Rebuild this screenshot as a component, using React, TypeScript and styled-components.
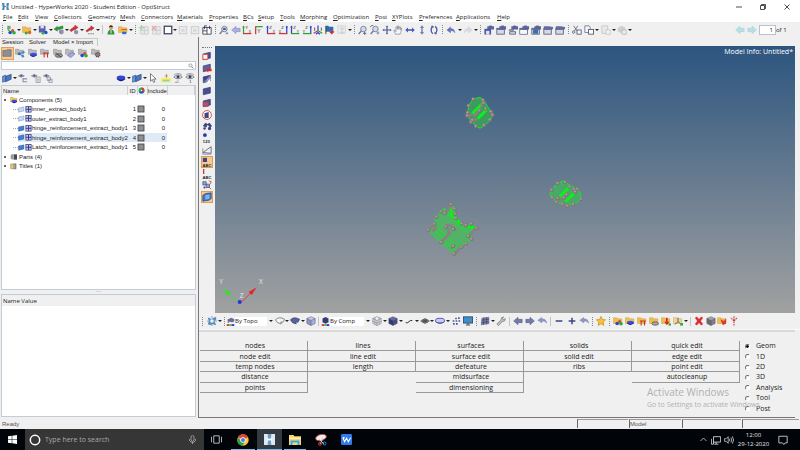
import React from "react";
import styled, { createGlobalStyle, css } from "styled-components";

const ui = '"Open Sans", "Noto Sans", sans-serif';
const arial = '"Liberation Sans", Arial, sans-serif';

const GlobalStyle = createGlobalStyle`
  * { box-sizing: border-box; }
  html, body { margin: 0; padding: 0; }
  body { background: #f0f0f0; color: #222; font-family: ${ui}; font-size: 6px; line-height: 8px; }
  button, input, select { font: inherit; color: inherit; margin: 0; padding: 0; border: 0; background: none; border-radius: 0; }
  ul { list-style: none; margin: 0; padding: 0; }
`;

/* ---------- icons ---------- */

const N = "#3d4682";
const folder = (c = "#f3bd4a") => (
  <path d="M0.5 2h4l1 1.3h5V9h-10z" fill={c} stroke="#a88a50" strokeWidth=".4" />
);
const greyFolder = (
  <path d="M0.5 1.5h4l1 1.2h4.5V7.5h-9.5z" fill="#b9b9b9" stroke="#7d7d7d" strokeWidth=".5" />
);
const balls = (
  <>
    <circle cx="8" cy="6.8" r="1.9" fill="#e3452f" />
    <circle cx="5" cy="9" r="2.2" fill="#2947d8" />
    <circle cx="9.6" cy="9.3" r="2.2" fill="#2fae34" />
  </>
);
const disc = (
  <>
    <path d="M2.5 7.5v1.500q3.500 3.500 8 0v-1.500z" fill="#121d8c" />
    <ellipse cx="6.500" cy="7.500" rx="4" ry="1.900" fill="#3c4ee0" />
  </>
);
const cube = (t: string, l: string, r: string) => (
  <>
    <path d="M6 .8l5 2.200-5 2.400-5-2.400z" fill={t} />
    <path d="M1 3l5 2.400v6L1 8.900z" fill={l} />
    <path d="M11 3L6 5.400v6l5-2.500z" fill={r} />
    <path d="M6 .8l5 2.200v5.900l-5 2.500-5-2.500V3zM1 3l5 2.400L11 3M6 5.400v6" fill="none" stroke="#3b3f68" strokeWidth=".5" />
  </>
);
const slab = (fill: string) => (
  <path d="M1.500 3.500l8.500-2v7l-8.500 2z" fill={fill} stroke="#242c66" strokeWidth=".7" />
);
const axes = (v: string, h: string, flip: boolean, a: string, b: string) => (
  <g>
    <path d={flip ? "M10.500 1.500v9" : "M1.800 1.500v9"} stroke={v} strokeWidth="1.500" />
    <path d="M1.200 10.300h10" stroke={h} strokeWidth="1.500" />
    <path d={flip ? "M9 3l1.500-2.500L12 3" : "M.3 3l1.500-2.500L3.300 3"} fill={v} />
    <text x={flip ? 4 : 3.8} y="5" fontSize="5" fontFamily="Liberation Sans" fill="#222">{a}</text>
    <text x={flip ? 1 : 8} y="9" fontSize="4" fontFamily="Liberation Sans" fill="#222">{b}</text>
  </g>
);
const lens = (
  <>
    <circle cx="6.500" cy="4.800" r="3.300" fill="#d5daf0" stroke="#70758f" />
    <path d="M4 7.200L.8 10.800" stroke="#70758f" strokeWidth="1.500" />
  </>
);
const eye = (
  <>
    <path d="M1 5q5-5.500 10 0-5 4-10 0z" fill="#e8e8ea" stroke="#555a68" strokeWidth=".8" />
    <circle cx="6" cy="4.600" r="1.800" fill="#39415c" />
    <path d="M1 2.500Q6-1.500 11 2.500" fill="none" stroke="#777" strokeWidth=".7" />
  </>
);
const smallEye = (
  <>
    <path d="M.5 3.500q3.500-3.500 7 0-3.500 3-7 0z" fill="#dde" stroke="#6a7084" strokeWidth=".8" />
    <circle cx="4" cy="3.300" r="1.300" fill="#44506e" />
  </>
);
const win = (
  <>
    <rect x="1" y="4" width="9" height="7" fill="#d6d8e2" stroke="#575c7a" />
    <path d="M1 5h9" stroke="#575c7a" strokeWidth="1.500" />
  </>
);
const cam = <path d="M4 1.500h2l.6-1h2.500l.5 1H12v4H4z" fill="#5a619c" />;
const bend = (c: string) => (
  <path d="M10.800 9.500Q10 4 5.500 4.300V2L1 6l4.500 3.500V7Q8.500 6 10.800 9.500z" fill={c} stroke="#6a70a8" strokeWidth=".4" />
);
const back = (c: string, s: string) => (
  <path d="M.8 6L6 1.500V4h5v4H6v2.500z" fill={c} stroke={s} strokeWidth=".6" />
);
const forward = (c: string, s: string) => (
  <path d="M11.200 6L6 1.500V4H1v4h5v2.500z" fill={c} stroke={s} strokeWidth=".6" />
);
const swoosh = (c: string) => (
  <path d="M11.500 8.500Q11 3 6 3.500L5.500 1.800 1 5.200l4.800 3 .2-1.900Q9.500 5.500 11.500 8.500z" fill={c} stroke="#5a619a" strokeWidth=".4" />
);
const abc = (
  <text x=".5" y="11.500" fontSize="5" fontWeight="700" fontFamily="Liberation Sans" fill="#222">ABC</text>
);
const rainbow = (
  <>
    <path d="M1 9.500h3.300V12H1z" fill="#e33" />
    <path d="M4.300 9.500h3.300V12H4.300z" fill="#3c3" />
    <path d="M7.600 9.500H11V12H7.600z" fill="#33e" />
  </>
);

const art: Record<string, React.ReactNode> = {
  model: <>{balls}<path d="M1.500 1h4v4h-4z" fill="#74a86b" /><path d="M2 5l3 3" stroke="#2fae34" strokeWidth="1.500" /></>,
  open: <>{folder()}<circle cx="5" cy="9.500" r="1.800" fill="#2fae34" /><circle cx="9" cy="9" r="2" fill="#e05b2a" /></>,
  save: <><path d="M1 1h8v8H1z" fill="#5b62a8" /><path d="M3 1h4v3H3z" fill="#e2e5f4" /><circle cx="6" cy="10" r="1.700" fill="#2fae34" /><circle cx="9.500" cy="9" r="2" fill="#2947d8" /></>,
  importG: <><path d="M0 5l4-3.500V3l6.500-2 .5 3-7 2v1.500z" fill="#2a9a34" stroke="#176a1e" strokeWidth=".4" /><path d="M6 6l2-1 3.500 1v4L9 11.500 6 10z" fill="#8d92aa" /></>,
  exportR: <><path d="M1 6l6-4.500V0l4 3-4 3V5L2.500 8z" fill="#d23434" stroke="#8c1717" strokeWidth=".4" /><path d="M6 7l2-1 3 1v3L9 11.500 6 10z" fill="#8d92aa" /></>,
  solveR: <><path d="M1 7l6-4.500V1l4 2.500L7 7V5.500L2.500 8.500z" fill="#d23434" stroke="#8c1717" strokeWidth=".4" /><path d="M4 10.500h7" stroke="#333" strokeDasharray="1.300 1.300" /></>,
  person: <><circle cx="6" cy="2.800" r="2.500" fill="#d99a55" /><path d="M3.500 2.500Q6-2 8.500 2.500z" fill="#3b2a18" /><path d="M1.800 11.500q.5-6 4.200-6t4.200 6z" fill="#2f9240" /><path d="M6 6v4" stroke="#fff" /></>,
  folderRB: <>{folder()}<path d="M4 5h7v1.500H4z" fill="#e2452e" /><path d="M4 6.500h7V8H4z" fill="#f4d52d" /><path d="M5 8h5v3H5z" fill="#3766d8" /></>,
  pagePlus: <g opacity=".35"><path d="M2 2h9v9H2zM6.500 2v9M2 6.500h9" fill="#ddd" stroke="#888" /><path d="M3 0v6M0 3h6" stroke="#2a9a34" strokeWidth="1.500" /></g>,
  pageX: <g opacity=".35"><path d="M2 2h9v9H2zM6.500 2v9M2 6.500h9" fill="#ddd" stroke="#888" /><path d="M1 1l5 5M6 1L1 6" stroke="#d22" strokeWidth="1.500" /></g>,
  square: <rect x="1.500" y="1.500" width="9" height="9" fill="#fff" stroke="#3b3f5c" strokeWidth="1.500" />,
  layoutDim: <g opacity=".45"><rect x="1.500" y="2" width="9" height="8.500" fill="#e4e4ea" stroke="#999" /><path d="M4 5h4v3H4z" fill="#bbb" /></g>,
  sheets: <><path d="M1 3h10v8H1z" fill="#fff" stroke="#33384f" /><path d="M6 3v8M1 7h5" stroke="#33384f" /><path d="M3 5V1h3M9 5V1" stroke="#33384f" fill="none" /></>,
  lensBox: <>{lens}<rect x="5" y="3.500" width="3" height="2.500" fill="#4d568e" /><path d="M8 9h3v2H8z" fill="#8a8fa8" /></>,
  lensPlus: <>{lens}<path d="M8 8v4M6 10h4" stroke="#555a78" /></>,
  lensBack: <>{lens}<path d="M0 3q1-3 4-2.500" stroke="#555a78" fill="none" /><path d="M8 8h3v3H8z" fill="#9aa0ba" /></>,
  back: back("#a9b0e0", "#7f86bd"),
  backDark: back("#747ba8", "#4c5382"),
  forwardDark: forward("#747ba8", "#4c5382"),
  pageBack: back("#b9dfe6", "#a2ccd5"),
  pageForward: forward("#b9dfe6", "#a2ccd5"),
  ax1: axes("#2ba33a", "#d43434", false, "Y", "X"),
  ax2: <g><path d="M1.500 2h9" stroke="#2ba33a" strokeWidth="1.500" /><path d="M2 2v9" stroke="#d43434" strokeWidth="1.500" /><text x="4" y="10" fontSize="6" fill="#222" fontFamily="Liberation Sans">Y</text></g>,
  ax3: axes("#3244cf", "#d43434", false, "Z", "X"),
  ax4: axes("#3244cf", "#d43434", true, "Z", "X"),
  ax5: axes("#3244cf", "#2ba33a", false, "Z", "Y"),
  ax6: axes("#3244cf", "#2ba33a", true, "Z", "Y"),
  ax7: <g strokeWidth="1.500" fill="none"><path d="M6 7V.5" stroke="#3244cf" /><path d="M6 7L.8 10" stroke="#d43434" /><path d="M6 7l5.200 3" stroke="#2ba33a" /><path d="M2 3v4M10 3v4" stroke="#444" strokeWidth="1" /><path d="M3.500 11L6 9l2.500 2" stroke="#3244cf" /></g>,
  flag: <><path d="M1 1h3l1 1h5v6H1z" fill="#2f6fae" /><path d="M1 1v10" stroke="#333" /><path d="M5 8l3 3.500L11.500 8l-3-1z" fill="#d43030" /></>,
  figureDim: <g opacity=".4"><rect x="1" y="1" width="9" height="9" fill="#d9e9ef" stroke="#9ab" /><circle cx="6" cy="4.500" r="2" fill="#d9a679" /><path d="M3 10q3-5 6 0z" fill="#8aa" /></g>,
  cross: <path d="M6 .5l1.500 2H6.700v2.800h2.800v-.8l2 1.500-2 1.500v-.8H6.700v2.800h.8l-1.500 2-1.500-2h.8V6.700H2.500v.8L.5 6l2-1.500v.8h2.800V2.500h-.8z" fill="#4b5491" />,
  hand: <path d="M3 11L1 6.500l1.200-.4L3.500 8V2.500l1.200-.3.500 3 .3-4h1.200l.2 4 .8-3.200 1.200.2-.2 3.600 1-2 1 .4-1.300 4.500L8.500 11z" fill="#f6f6f8" stroke="#6c7086" strokeWidth=".7" />,
  arrowsH: <path d="M.3 6l3.200-3v2h5V3l3.200 3-3.200 3V7h-5v2z" fill="#4953b5" />,
  arrowsV: <path d="M6 .3l2.600 3.200H6.900v5h1.700L6 11.700 3.400 8.500h1.700v-5H3.400z" fill="#7981bd" />,
  rotate: <g fill="none" stroke="#4b55a8" strokeWidth="1.500"><path d="M4.500 1.500Q.5 6 4.500 10.500" /><path d="M7.500 1.500q4 4.500 0 9" /><path d="M2.500 1.500h2.500v2M9.500 10.500H7v-2" strokeWidth="1" /></g>,
  undo: bend("#6670c0"),
  undoL: swoosh("#8d95cc"),
  redoDim: <g opacity=".35" transform="matrix(-1 0 0 1 12 0)">{bend("#b3b6cf")}</g>,
  w1: <>{cam}<path d="M.5 4.500h8v7h-8z" fill="#4f58a0" /><path d="M2.500 7h4v4.500h-4z" fill="#e3e5f0" /></>,
  w2: <>{win}{cam}</>,
  w3: <><path d="M2 8h7v3H2z" fill="#d6d8e2" stroke="#575c7a" />{cam}<path d="M1 6h6" stroke="#575c7a" strokeWidth="1.500" /></>,
  w4: <>{win}{cam}<path d="M1.500 6h8v4.500h-8z" fill="#f8f8fa" /></>,
  w5: <>{win}{cam}<path d="M2.500 6h6v4.500h-6z" fill="#3c6fa2" /></>,
  w6: <>{win}<path d="M1 1.500h6l5 1V5H1z" fill="#6269a6" /></>,
  cut: <><path d="M2 1l4 6M7 1L3 7" stroke="#5c6074" /><circle cx="2" cy="8.500" r="1.500" fill="none" stroke="#5c6074" /><rect x="6" y="6" width="5" height="5" fill="#fff" stroke="#4d5170" /></>,
  copy: <><path d="M1 1h5l1.500 2v6H1z" fill="#f4f4f7" stroke="#73778c" /><rect x="5.500" y="5.500" width="6" height="5.500" fill="#fff" stroke="#4d5170" /></>,
  pasteDim: <g opacity=".35"><path d="M1 1h7v9H1z" fill="#dcdde6" stroke="#777" /><rect x="6" y="6" width="5" height="5" fill="#fff" stroke="#777" /></g>,
  bugDim: <g opacity=".45"><path d="M1 4l4-3 5 2v5L5 9.500 1 8z" fill="#a7a9b8" /><rect x="6" y="6" width="5" height="5" fill="#eee" stroke="#777" /></g>,

  browse: <path d="M1 3h4l1-1h5v8H1z" fill="#8c8f96" stroke="#5d6068" strokeWidth=".7" />,
  bModel: <>{greyFolder}<path d="M5 7l5-2M5 7l4.500 3" stroke="#3b6db4" /><circle cx="5" cy="7" r="1.800" fill="#3b6db4" /><circle cx="10" cy="5" r="1.500" fill="#3b8ad0" /><circle cx="9.500" cy="10" r="1.500" fill="#3b8ad0" /></>,
  bDisc: <>{greyFolder}{disc}</>,
  bPi: <>{greyFolder}<path d="M3.500 6h7M5 6v5.500M9 6v5.500" stroke="#c8322d" strokeWidth="1.300" /></>,
  bPart: <>{greyFolder}<ellipse cx="7" cy="9" rx="4.500" ry="2.200" fill="#999" stroke="#444" strokeWidth=".8" /><path d="M3 6l7 5" stroke="#444" /></>,
  bMesh: <>{greyFolder}<path d="M3 9l5-4 4 2-5 4.500z" fill="#a3aadb" stroke="#5660a5" strokeWidth=".7" /></>,
  bSets: <>{greyFolder}{balls}</>,
  bGear: <>{greyFolder}<circle cx="8" cy="8" r="2.700" fill="#8b7d7d" stroke="#5e4646" strokeWidth="1.400" strokeDasharray="1.400 .8" /></>,
  shells: <><path d="M.5 4l4-1.500V10l-4 1z" fill="#5f93d8" stroke="#1f3f87" strokeWidth=".6" /><path d="M4.500 4l6.500-2.500v6L4.500 10.500z" fill="#4a78c0" stroke="#1b3169" strokeWidth=".6" /></>,
  eyeTree: <>{smallEye}<path d="M6 7h5M6 10.500h5M6 6v5" stroke="#8890ab" strokeWidth="1.300" /></>,
  eyeDoc: <>{smallEye}<path d="M6 5h5v6.500H6zM7 7.500h3M7 9.500h3" fill="#f1f1f4" stroke="#80869c" strokeWidth=".8" /></>,
  eyeStack: <>{smallEye}<path d="M5 5h4v4H5zM7 7.500h4v4H7z" fill="#e1e4ef" stroke="#80869c" strokeWidth=".8" /></>,
  disc: <><path d="M1 5.500v2q5 4.500 10 0v-2z" fill="#121d8c" /><ellipse cx="6" cy="5.500" rx="5" ry="2.500" fill="#3545d4" /></>,
  cursor: <path d="M3 .8v9l2.200-2 1.500 3.500 1.500-.8-1.500-3.200h3z" fill="#fff" stroke="#444" strokeWidth=".8" />,
  highlight: <><path d="M0 6h12v5.500H0z" fill="#f6ef62" /><path d="M2 8h8v2H2z" fill="#83d0dc" /><path d="M6.500 1v5M4.500 3.500h4" stroke="#c9882f" /></>,
  eyePM: <>{eye}<text x="2" y="12" fontSize="5" fill="#333" fontFamily="Liberation Sans">+/-</text></>,
  eye1: <>{eye}<text x="5" y="12" fontSize="5" fill="#333" fontFamily="Liberation Sans">1</text></>,
  search: <><circle cx="5" cy="5" r="3.300" fill="#eef" stroke="#666a74" /><path d="M7.500 7.500L11 11" stroke="#666a74" strokeWidth="1.500" /></>,
  comps: <>{folder("#f2c14b")}{disc}</>,
  sheetOff: <path d="M1 3.500l9-2v7l-9 2z" fill="#c4d8f4" stroke="#7190c0" strokeWidth=".8" />,
  sheetOn: <path d="M1 3.500l9-2v7l-9 2z" fill="#3f7fd6" stroke="#1c438c" strokeWidth=".8" />,
  mesh: <><rect x="1.500" y="1" width="9" height="9.500" fill="#c5c9ea" stroke="#2a2f78" strokeWidth="1.200" /><path d="M6 1v9.500M1.500 5.700h9" stroke="#2a2f78" strokeWidth="1.500" /></>,
  parts: <><path d="M1 3l4-2v9l-4-1.500z" fill="#999" /><path d="M5.500 2h5v8h-5z" fill="#444a55" /></>,
  titles: <><path d="M1 3h8v7H1z" fill="#eac76a" stroke="#8a6b21" strokeWidth=".7" /><path d="M6 2v9M8.500 2v9" stroke="#3768b6" /></>,
  wheel: <><circle cx="6" cy="6" r="5" fill="#2fb446" /><path d="M6 6V1A5 5 0 0 1 10.500 8.500z" fill="#e0392d" /><path d="M6 6l4.500 2.500A5 5 0 0 1 1.500 8.500z" fill="#2b56d6" /><circle cx="6" cy="6" r="1.300" fill="#fff" /></>,
  swatch: <rect x="1.500" y="1.500" width="9" height="9" fill="#8d8f93" stroke="#444" strokeWidth="1.300" />,

  v1: <>{slab("#454f92")}<path d="M1 4h6v6H1z" fill="#fff3f0" stroke="#db3a31" /></>,
  v2: <>{slab("#5a63a0")}<path d="M4.500 8.500l3-3V7h4v3h-4v1.500z" fill="#df2828" /></>,
  v3: <>{slab("#8a91c0")}<path d="M1.500 3.500L10 1.500 2 10z" fill="#3b4588" /><path d="M5 11l5-6v5z" fill="#fff" /></>,
  v4: slab("#454f92"),
  v5: <>{slab("#454f92")}<path d="M1.500 5h6v5h-6z" fill="#8b5f8a" stroke="#db3a31" /></>,
  v6: <><circle cx="6" cy="6" r="5.300" fill="#fff" stroke="#d43a32" /><path d="M3 4l5-1.500v7L3 9.500z" fill={N} /></>,
  v7: <g fill={N}><path d="M1 6l3-4 3 2-2 4zM6 4l3-2 3 4-2 2z" /><circle cx="3" cy="9" r="1.500" /><circle cx="9" cy="9" r="2" /></g>,
  v8: <><circle cx="3.500" cy="2.500" r="2.300" fill="#2436b9" /><text x="1" y="11.500" fontSize="5" fontWeight="700" fontFamily="Liberation Sans" fill="#222">123</text></>,
  v9: <g fill="none" stroke="#555b7c"><path d="M1 9l10-7v8z" /><path d="M1 4v7h10" stroke="#80859f" /></g>,
  v10: <><path d="M1 1h5v5H1z" fill={N} />{abc}</>,
  v11: <><path d="M2 0v6" stroke="#d42a2a" strokeWidth="1.500" />{abc}</>,
  v12: <><path d="M1 2h4v4H1zM5 5h4v4H5z" fill="#9aa0cc" stroke={N} strokeWidth=".8" /><path d="M8 1l3 1-1 3M8 8l3 3" stroke="#c8493c" fill="none" /><circle cx="3" cy="9" r="1.300" fill={N} /></>,
  v13: <><path d="M1 4l3-2 7-1v7l-3 2-7 1z" fill="#3c7fd0" stroke="#173d80" strokeWidth=".8" /><path d="M4 4l5-1v5l-5 1z" fill="#7fb2ea" /></>,

  explode: <><path d="M1 2h3v2l4-2 3-1v4L9 6l2 5-4-1-3 1-3-1 1-4z" fill="#5f8fc0" /><circle cx="6" cy="6" r="2.200" fill="#e8f0f8" /><path d="M6 0v2M0 6h2M12 6h-2M6 12v-2" stroke="#88b4dc" strokeWidth="1.500" /></>,
  topo: <><path d="M3 3l4-2 4 2v3L8 7 3 6z" fill="#656da5" /><path d="M3 8V3" stroke="#444" />{rainbow}</>,
  comp: <><path d="M2 2l4-2 4 2v5L6 9 2 7z" fill="#343c74" />{rainbow}</>,
  surfW: <path d="M.5 4.500Q5 0 11.500 4L9.500 7.500 7 7 7.500 9.500 3 8z" fill="#f6f6f6" stroke="#50535f" strokeWidth=".8" />,
  surfB: <path d="M.5 4.500Q5 0 11.500 4L9.500 7.500 7 7 7.500 9.500 3 8z" fill="#5a629c" stroke="#343a68" strokeWidth=".8" />,
  cubeL: cube("#c3c8e6", "#8f97c7", "#a9b0da"),
  cubeD: cube("#6a719f", "#343b6c", "#474f88"),
  cubeW: <>{cube("#f4f4f4", "#e8e8e8", "#eee")}<path d="M3.500 2v8M8.500 2v8M1 6l5 2.500L11 6" fill="none" stroke="#666" strokeWidth=".6" /></>,
  line: <path d="M2 8h2.500l3-2.500H10" stroke="#333" strokeWidth="1.200" fill="none" />,
  diamond: <><path d="M0 6l6-3.500L12 6 6 9.500z" fill="#6b6e66" /><path d="M3 4.300l6 3.400M3 7.700l6-3.400" stroke="#333" strokeWidth=".6" /></>,
  ring: <><path d="M.5 5.500v1.500Q6 11.500 11.500 7V5.500z" fill="#2a3394" /><ellipse cx="6" cy="5.500" rx="5.500" ry="2.800" fill="#c9cdf0" stroke="#3c45a8" /></>,
  dots: <path d="M5 2h2v2H5zM8.500 1.500h2v2h-2zM2 5h2v2H2zM5.500 5h2v2h-2zM9 5h2v2H9zM2.500 8.500h2v2h-2zM6 8.500h2v2H6z" fill="#4c569e" />,
  monitor: <><rect x=".5" y="1" width="11" height="7.500" fill="#3d8fc9" stroke="#2b4968" /><path d="M3.500 10.800h5M6 8.500v2" stroke="#555" strokeWidth="1.300" /></>,
  meshBig: <><path d="M2 2l9-1v8.500L1 11z" fill="#7b82a8" /><path d="M4.800 1.700L4 10.500M8 1.400v8.700M1.500 5l9.500-1M1.300 8l9.700-1.200" stroke="#33395e" strokeWidth=".7" /></>,
  wrench: <path d="M1 9.500L6 5q-.5-3.500 3-4L8 3.200l1 1 2.300-1Q11 7 7.500 6.800L3 11.500z" fill="#bdc0c8" stroke="#62666f" strokeWidth=".7" />,
  minus: <path d="M2 6h8" stroke="#3b4480" strokeWidth="1.800" />,
  plus: <path d="M2 6h8M6 2v8" stroke="#3b4480" strokeWidth="1.800" />,
  star: <path d="M6 .5l1.700 3.600 3.800.5L8.700 7.300l.7 4L6 9.300l-3.400 2 .7-4L.5 4.600l3.800-.5z" fill="#fbc02a" stroke="#a47412" strokeWidth=".6" />,
  fBalls: <>{folder()}{balls}</>,
  fPi: <>{folder()}<path d="M3.500 6h7M5 6v5.500M9 6v5.500" stroke="#c8322d" strokeWidth="1.300" /></>,
  fPart: <>{folder()}<ellipse cx="7.500" cy="9" rx="4" ry="2" fill="#aaa" stroke="#555" /></>,
  fArrow: <>{folder()}<path d="M6 2v5H4l3 4 3-4H8V2z" fill="#d7261e" /><path d="M9 9h3v2.500H9z" fill="#2fae34" /></>,
  fAxis: <>{folder("#efd592")}<path d="M6 2v5l-4 3M6 7l3 2" stroke="#555" fill="none" /><path d="M8.500 8.500H12v3H8.500z" fill="#2fae34" /></>,
  redX: <path d="M1.500 2.500L3 1l3 3 3-3 1.500 1.500L7.800 6l2.700 3.500L9 11 6 8l-3 3-1.500-1.500L4.200 6z" fill="#dc2c2c" stroke="#dc2c2c" strokeWidth=".6" />,
  cubeG: cube("#a5a5a5", "#6d6d6d", "#828282"),
  fRed: <>{folder()}<path d="M4 4l4 2 3-3v6l-4 2z" fill="#dd3a2a" /></>,
  fork: <g fill="none" stroke="#c13c3c" strokeWidth="1.300" strokeDasharray="2 .7"><path d="M6 11.500V6L2 2M6 6l4-4M6 5V0" /></g>,
};

const Svg = styled.svg<{ $s: number }>`
  display: block;
  flex: none;
  width: ${(p) => p.$s}px;
  height: ${(p) => p.$s}px;
`;
const Icon = ({ k, s = 10 }: { k: string; s?: number }) => (
  <Svg $s={s} viewBox="0 0 12 12" aria-hidden="true">{art[k]}</Svg>
);

/* ---------- toolbar parts ---------- */

const Group = styled.div<{ $w: number }>`
  display: flex;
  align-items: center;
  flex: 0 0 ${(p) => p.$w}px;
`;
const Tool = styled.button<{ $active?: boolean }>`
  display: flex;
  flex: 12 1 0;
  min-width: 0;
  height: 13px;
  align-items: center;
  justify-content: center;
  ${(p) => p.$active && css`background: #f9c98f; outline: 1px solid #d9a05c; outline-offset: -1px;`}
`;
const CaretCell = styled.span`
  flex: 4 1 0;
  display: flex;
  justify-content: center;
  &::after {
    content: "";
    border: 2px solid transparent;
    border-top-color: #222;
    border-bottom: 0;
  }
`;
const Grip = styled.span`
  flex: 5 1 0;
  display: flex;
  justify-content: center;
  &::after {
    content: "";
    height: 9px;
    border-left: 1px dotted #888;
  }
`;
const Rule = styled(Grip)`
  &::after { border-left: 1px solid #c4c4c4; }
`;

const Tools = ({ w, items }: { w: number; items: string }) => (
  <Group $w={w}>
    {items.split(" ").map((k, i) =>
      k === ":" ? <Grip key={i} /> : k === "|" ? <Rule key={i} /> : k === "v" ? <CaretCell key={i} /> : (
        <Tool key={i} type="button" aria-label={k}><Icon k={k} /></Tool>
      )
    )}
  </Group>
);

/* ---------- window chrome ---------- */

const Page = styled.div`
  display: flex;
  flex-direction: column;
  min-height: 100vh;
`;
const TitleBar = styled.header`
  display: flex;
  align-items: center;
  height: 13px;
  padding-left: 2px;
  gap: 2px;
  background: #fff;
`;
const WinButtons = styled.div`
  display: flex;
  margin-left: auto;
  padding-right: 1px;
`;
const WinButton = styled.button`
  width: 24px;
  height: 12px;
  display: flex;
  align-items: center;
  justify-content: center;
`;
const MenuBar = styled.ul`
  display: grid;
  grid-template-columns: 15px 17px 19px 34px 32px 21px 36px 32px 34px 15px 22px 20px 33px 42px 17px 27px 37px 41px 20px;
  height: 9px;
  padding-left: 3px;
  background: #fff;
`;
const MenuItem = styled.button`
  display: block;
  line-height: 9px;
  white-space: nowrap;
  &::first-letter { text-decoration: underline; }
`;
const TopTools = styled.div`
  display: flex;
  align-items: center;
  height: 15px;
  background: #f0f0f0;
`;
const Pager = styled.div`
  display: flex;
  align-items: center;
  margin-left: auto;
  width: 65px;
  margin-right: 1px;
`;
const PageInput = styled.input`
  width: 17px;
  height: 10px;
  flex: none;
  margin-left: 1px;
  padding-right: 2px;
  background: #fff;
  border: 1px solid #b6c3cf;
  text-align: right;
`;
const Body = styled.main`
  display: flex;
  flex: 1;
`;

/* ---------- left browser ---------- */

const Side = styled.aside`
  display: flex;
  flex-direction: column;
  flex: 0 0 199px;
  padding: 1px 2px 1px 1px;
  border-right: 1px solid #777;
  font-family: ${arial};
`;
const Tabs = styled.div`
  display: flex;
  height: 8px;
  width: 97px;
  padding-left: 1px;
  border-top: 1px solid #c8c8c8;
  border-right: 1px solid #c8c8c8;
`;
const Tab = styled.button<{ $w: number }>`
  width: ${(p) => p.$w}px;
  flex: none;
  line-height: 7px;
  white-space: nowrap;
  text-align: left;
`;
const Browsers = styled.div`
  display: flex;
  width: 101px;
  height: 14px;
  align-items: center;
`;
const SearchBox = styled.label`
  display: flex;
  align-items: center;
  margin-top: 1px;
  height: 9px;
  padding-right: 1px;
  background: #fff;
  border: 1px solid #c3ccd4;
  input { flex: 1; min-width: 0; height: 7px; outline: 0; }
`;
const ViewTools = styled.div`
  display: flex;
  justify-content: space-between;
  height: 15px;
`;
const Pane = styled.section<{ $grow?: boolean }>`
  ${(p) => (p.$grow ? "flex: 1;" : "flex: 0 0 205px;")}
  background: #fff;
  border: 1px solid #c3ccd4;
`;
const Tree = styled.table`
  width: 100%;
  table-layout: fixed;
  border-collapse: collapse;
  th {
    height: 9px;
    padding: 0;
    background: #f0f0f0;
    border-right: 1px solid #d0d0d0;
    text-align: left;
    font-weight: 400;
    line-height: 8px;
  }
  td { padding: 0; line-height: 8px; white-space: nowrap; }
  td:nth-child(4) { text-align: right; padding-right: 2px; }
  td:nth-child(2) { text-align: right; padding-right: 1px; }
  th:nth-child(2) { padding-left: 2px; }
  th:nth-child(1) { padding-left: 1px; }
`;
const Row = styled.tr<{ $on?: boolean }>`
  height: 9px;
  &:nth-child(even) { height: 10px; }
  td:not(:last-child) { background: ${(p) => (p.$on ? "#deebf7" : "none")}; }
  td:first-child { background: ${(p) => (p.$on ? "linear-gradient(90deg, #fff 16px, #deebf7 16px)" : "none")}; }
`;
const Leaf = styled.span<{ $child?: boolean }>`
  display: flex;
  align-items: center;
  gap: ${(p) => (p.$child ? 0 : 1)}px;
  padding-left: ${(p) => (p.$child ? 11 : 2)}px;
  height: 9px;
`;
const Twig = styled.i`
  flex: none;
  width: 5px;
  border-top: 1px dotted #aaa;
`;
const Knob = styled.i`
  flex: none;
  width: 2px;
  height: 2px;
  margin-right: 3px;
  background: #666;
`;
const Sash = styled.div`
  display: flex;
  justify-content: center;
  height: 4px;
  line-height: 3px;
  color: #777;
`;
const PaneHead = styled.div`
  height: 11px;
  padding-left: 1px;
  background: #f0f0f0;
  line-height: 12px;
  font-family: ${ui};
`;

/* ---------- right side ---------- */

const Work = styled.section`
  display: flex;
  flex-direction: column;
  flex: 1;
  min-width: 0;
`;
const Upper = styled.div`
  display: flex;
  height: 276px;
  padding: 9px 5px 0 0;
`;
const Rail = styled.div`
  display: flex;
  flex-direction: column;
  flex: 0 0 16px;
  height: 157px;
  padding: 4px 2px 0;
  &::before {
    content: "";
    flex: none;
    width: 10px;
    margin: -3px 0 2px 1px;
    border-top: 1px dotted #777;
  }
  ${Tool} { width: 12px; height: auto; }
`;
const Viewport = styled.div`
  position: relative;
  flex: 1;
  min-width: 0;
  background: linear-gradient(#2c557f, #a1a1a1);
  overflow: hidden;
`;
const Scene = styled.svg`
  display: block;
  width: 100%;
  height: 100%;
`;
const Info = styled.div`
  position: absolute;
  top: 2px;
  right: 2px;
  color: #fff;
  font-size: 7px;
`;
const LowerTools = styled.div`
  display: flex;
  align-items: center;
  height: 17px;
  padding-left: 1px;
  border-bottom: 1px solid #fafafa;
`;
const Picker = styled.label<{ $w: number }>`
  display: flex;
  align-items: center;
  flex: 0 0 ${(p) => p.$w}px;
  select {
    appearance: none;
    flex: 1;
    min-width: 0;
    height: 9px;
    line-height: 9px;
    background: #fff;
  }
  ${CaretCell} { flex: 0 0 7px; }
`;
const Panel = styled.div`
  position: relative;
  flex: 1;
  display: grid;
  grid-template-columns: 1fr 55px;
  align-items: start;
  margin-right: 5px;
  padding-top: 9px;
  border-top: 2px solid #d9d9d9;
  border-bottom: 1px solid #777;
  font-size: 7px;
`;
const Commands = styled.div`
  display: grid;
  grid-template-columns: repeat(5, 1fr);
  padding-left: 1px;
`;
const Column = styled.div`
  display: grid;
  grid-template-rows: repeat(5, 1fr);
  height: 52px;
`;
const Command = styled.button`
  padding-left: 3px;
  border-right: 1px solid #999;
  border-bottom: 1px solid #999;
  line-height: 9px;
`;
const Modes = styled.div`
  display: grid;
  grid-auto-rows: 1fr;
  height: 73px;
  padding-left: 5px;
`;
const Mode = styled.label`
  display: flex;
  align-items: center;
  gap: 6px;
  input {
    appearance: none;
    width: 5px;
    height: 5px;
    border: 1px solid;
    border-color: #666 #fff #fff #777;
    border-radius: 50%;
    background: #fff;
  }
  input:checked { background: radial-gradient(#111 1px, #fff 2px); }
`;
const Watermark = styled.div`
  position: absolute;
  left: 448px;
  top: 53px;
  color: #b0b0b0;
  font-size: 10px;
  line-height: 14px;
  white-space: nowrap;
  pointer-events: none;
  small { display: block; font-size: 7px; line-height: 12px; }
`;
const Status = styled.div`
  display: flex;
  align-items: center;
  height: 11px;
  padding-left: 2px;
  font-family: ${arial};
  color: #555;
`;
const StatusText = styled.span`
  flex: 1;
  line-height: 10px;
`;
const StatusCell = styled.span<{ $w: number }>`
  flex: 0 0 ${(p) => p.$w}px;
  height: 9px;
  border-left: 1px solid #666;
  border-top: 1px solid #999;
  margin-right: 1px;
  line-height: 8px;
`;

/* ---------- taskbar ---------- */

const Taskbar = styled.footer`
  display: flex;
  height: 21px;
  background: #010409;
  color: #e8e8e8;
`;
const TaskButton = styled.button<{ $w: number; $open?: boolean; $on?: boolean }>`
  flex: 0 0 ${(p) => p.$w}px;
  display: flex;
  align-items: center;
  justify-content: center;
  background-color: ${(p) => (p.$on ? "#343a42" : "transparent")};
  border: solid transparent;
  border-width: 0 ${(p) => (p.$on ? 0 : 2)}px;
  background-clip: padding-box;
  ${(p) => p.$open && css`
    background-image: linear-gradient(#76b9ed, #76b9ed);
    background-size: 100% 1px;
    background-position: bottom;
    background-repeat: no-repeat;
  `}
`;
const Cortana = styled.label`
  display: flex;
  align-items: center;
  flex: 0 0 179px;
  padding: 0 7px 0 4px;
  gap: 4px;
  background: #363636;
  font-size: 7px;
  input { flex: 1; min-width: 0; outline: 0; }
  input::placeholder { color: #a9a9a9; opacity: 1; }
`;
const Tray = styled.div`
  display: flex;
  align-items: center;
  margin-left: auto;
  gap: 3px;
  padding-right: 12px;
`;
const Clock = styled.time`
  width: 33px;
  margin-right: 5px;
  text-align: center;
  line-height: 9px;
  white-space: nowrap;
`;

const menus = ["File", "Edit", "View", "Collectors", "Geometry", "Mesh", "Connectors", "Materials", "Properties", "BCs", "Setup", "Tools", "Morphing", "Optimization", "Post", "XYPlots", "Preferences", "Applications", "Help"];

const bodies = [
  { name: "inner_extract_body1", shown: false },
  { name: "outer_extract_body1", shown: false },
  { name: "hinge_reinforcement_extract_body1", shown: true },
  { name: "hinge_reinforcement_extract_body2", shown: true },
  { name: "Latch_reinforcement_extract_body1", shown: true },
];

const columns = [
  ["nodes", "node edit", "temp nodes", "distance", "points"],
  ["lines", "line edit", "length"],
  ["surfaces", "surface edit", "defeature", "midsurface", "dimensioning"],
  ["solids", "solid edit", "ribs"],
  ["quick edit", "edge edit", "point edit", "autocleanup"],
];
const modes = ["Geom", "1D", "2D", "3D", "Analysis", "Tool", "Post"];
const rail = ["v1", "v2", "v3", "v4", "v5", "v6", "v7", "v8", "v9", "v10", "v11", "v12", "v13"];

const Beads = ({ d }: { d: string }) => (
  <>
    {d.split(" ").map((p) => {
      const [x, y] = p.split(",").map(Number);
      return (
        <g key={p}>
          <circle cx={x} cy={y} r="6" fill="#7d7474" />
          <circle cx={x - 1} cy={y - 1} r="3.500" fill="#a39999" />
        </g>
      );
    })}
  </>
);

const ModelScene = () => (
  <Scene viewBox="0 0 1740 801" preserveAspectRatio="xMinYMin slice">
    <g transform="translate(615 132)" strokeLinejoin="round">
      <g stroke="#0df01c" strokeWidth="3">
        <path d="M160 27L180 22 193 31 200 45 213 65 218 77 210 92 193 107 180 115 168 108 155 95 142 78 147 45z" fill="#3c9c60" />
        <path d="M157 71L186 42M173 86L200 59" strokeWidth="9" />
        <path d="M395 299L412 280 430 273 450 285 470 297 480 305 483 320 475 335 460 343 440 347 425 345 410 335 393 322 390 310z" fill="#4aa868" />
        <path d="M419 320L445 294M436 334L462 310" strokeWidth="9" />
        <path d="M93 343L105 356 104 372 125 402 138 407 155 402 170 415 150 435 158 446 140 460 125 472 103 492 60 455 25 420 45 395 50 378 72 355 80 360z" fill="#52b268" />
        <path d="M80 372L148 433M42 404L112 470M36 412L104 480" fill="none" />
        <path d="M90 355l14 26 20 26M86 368l20 18M142 412l18-2-8 14" strokeWidth="6" fill="none" />
      </g>
      <g stroke="#8a8181" strokeWidth="9" strokeLinecap="round" fill="none">
        <path d="M163 76L181 59M143 77l9-2M153 97l15-9M185 46l6-10" />
        <path d="M427 326L443 312M411 336l6-12M426 342l10 2M460 301l12-3" />
        <path d="M94 344L78 366M27 420l16-16M103 491l14-13M169 414l-24 24M40 422l8-8M64 457l24-26M76 410q12-8 20 0l8 8M88 430l-4-14M96 472l6-6" />
      </g>
      <Beads d="160,28 189,31 191,40 197,56 213,65 218,75 210,89 192,106 168,109 153,96 147,79 143,68 146,47 178,62 158,90 142,77" />
      <Beads d="395,300 413,280 436,277 449,290 462,297 473,297 466,305 483,327 460,342 443,348 428,342 410,337 414,325 397,323 440,314 432,323" />
      <Beads d="93,343 104,356 105,372 108,385 125,401 138,406 154,401 170,414 145,438 155,447 138,461 125,471 103,491 64,457 26,420 44,402 50,380 63,365 75,370 100,468 100,418 78,410" />
    </g>
    <g transform="translate(-60 672)">
      <path d="M135 100L92 64" stroke="#2ee62e" strokeWidth="2.500" />
      <path d="M82 54l26 15-8 8z" fill="#27e827" />
      <path d="M135 100L175 62" stroke="#e33131" strokeWidth="2.500" />
      <path d="M185 52l-24 14 9 9z" fill="#e82222" />
      <circle cx="134" cy="96" r="6" fill="#2535e0" />
      <g fill="#e6e6e6" fontSize="20" fontFamily="Open Sans">
        <text x="73" y="42">Y</text>
        <text x="192" y="42">X</text>
        <text x="134" y="84">Z</text>
      </g>
    </g>
  </Scene>
);

export default function App() {
  return (
    <Page>
      <GlobalStyle />
      <TitleBar>
        <Svg $s={7} viewBox="0 0 12 12"><path d="M0 0h4q1 6 0 12H0q2-6 0-12zM12 0H8Q7 6 8 12h4q-2-6 0-12zM3 5h6v2H3z" fill="#4a86b8" /></Svg>
        <span>Untitled - HyperWorks 2020 - Student Edition - OptiStruct</span>
        <WinButtons>
          <WinButton type="button" aria-label="Minimize"><Svg $s={6} viewBox="0 0 6 6"><path d="M0 3h6" stroke="#222" strokeWidth=".8" /></Svg></WinButton>
          <WinButton type="button" aria-label="Restore"><Svg $s={6} viewBox="0 0 6 6"><path d="M.5 1.500h4v4h-4zM1.500 1.500v-1h4v4h-1" fill="none" stroke="#222" strokeWidth=".8" /></Svg></WinButton>
          <WinButton type="button" aria-label="Close"><Svg $s={6} viewBox="0 0 6 6"><path d="M.5.5l5 5M5.500.5l-5 5" stroke="#222" strokeWidth=".8" /></Svg></WinButton>
        </WinButtons>
      </TitleBar>
      <MenuBar>
        {menus.map((m) => <li key={m}><MenuItem type="button">{m}</MenuItem></li>)}
      </MenuBar>
      <TopTools>
        <Tools w={133} items=": model v open v save v importG v exportR v solveR v | person folderRB v" />
        <Tools w={80} items=": pagePlus pageX square v layoutDim layoutDim sheets" />
        <Tools w={139} items=": lensBox back ax1 ax2 ax3 ax4 ax5 ax6 ax7 flag figureDim v" />
        <Tools w={88} items=": lensPlus lensBack cross hand arrowsH arrowsV rotate" />
        <Tools w={38} items=": undo v redoDim v" />
        <Tools w={88} items=": w1 w2 w3 w4 w5 w6 w6" />
        <Tools w={66} items=": cut copy v pasteDim v bugDim v" />
        <Pager>
          <Tools w={24} items="pageBack pageForward" />
          <PageInput aria-label="Page" defaultValue="1" />
          <span>of 1</span>
        </Pager>
      </TopTools>

      <Body>
        <Side>
          <Tabs>
            <Tab $w={27} type="button">Session</Tab>
            <Tab $w={24} type="button">Solver</Tab>
            <Tab $w={23} type="button">Model ×</Tab>
            <Tab $w={20} type="button">Import</Tab>
          </Tabs>
          <Browsers>
            <Tool $active type="button" aria-label="Browse"><Icon k="browse" /></Tool>
            {["bModel", "bDisc", "bPi", "bPart", "bMesh", "bSets", "bGear"].map((k) => (
              <Tool key={k} type="button" aria-label={k}><Icon k={k} /></Tool>
            ))}
          </Browsers>
          <SearchBox>
            <input type="text" aria-label="Search" />
            <Icon k="search" s={6} />
          </SearchBox>
          <ViewTools>
            <Tools w={53} items="shells v eyeTree eyeDoc eyeStack" />
            <Tools w={81} items="disc v shells v cursor highlight eyePM eye1" />
          </ViewTools>
          <Pane>
            <Tree>
              <colgroup>
                <col style={{ width: 125 }} /><col style={{ width: 10 }} /><col style={{ width: 10 }} /><col style={{ width: 20 }} /><col />
              </colgroup>
              <thead>
                <tr><th>Name</th><th>ID</th><th><Icon k="wheel" s={7} /></th><th>Include</th><th /></tr>
              </thead>
              <tbody>
                <Row><td><Leaf><Knob /><Icon k="comps" s={8} />Components (5)</Leaf></td><td /><td /><td /><td /></Row>
                {bodies.map((b, i) => (
                  <Row key={b.name} $on={i === 3}>
                    <td><Leaf $child><Twig /><Icon k={b.shown ? "sheetOn" : "sheetOff"} s={7} /><Icon k="mesh" s={7} />{b.name}</Leaf></td>
                    <td>{i + 1}</td>
                    <td><Icon k="swatch" s={8} /></td>
                    <td>0</td>
                    <td />
                  </Row>
                ))}
                <Row><td><Leaf><Knob /><Icon k="parts" s={8} />Parts (4)</Leaf></td><td /><td /><td /><td /></Row>
                <Row><td><Leaf><Knob /><Icon k="titles" s={8} />Titles (1)</Leaf></td><td /><td /><td /><td /></Row>
              </tbody>
            </Tree>
          </Pane>
          <Sash>···</Sash>
          <Pane $grow><PaneHead>Name Value</PaneHead></Pane>
        </Side>

        <Work>
          <Upper>
            <Rail>
              {rail.map((k) => (
                <Tool key={k} type="button" aria-label={k} $active={k === "v10" || k === "v13"}><Icon k={k} /></Tool>
              ))}
            </Rail>
            <Viewport>
              <ModelScene />
              <Info>Model Info: Untitled*</Info>
            </Viewport>
          </Upper>
          <LowerTools>
            <Tools w={22} items=": explode v" />
            <Tools w={4} items=":" />
            <Picker $w={48}>
              <Icon k="topo" s={9} />
              <select aria-label="Geometry colour"><option>By Topo</option></select>
              <CaretCell />
            </Picker>
            <Tools w={47} items="surfW v surfB v cubeL |" />
            <Picker $w={50}>
              <Icon k="comp" s={9} />
              <select aria-label="Element colour"><option>By Comp</option></select>
              <CaretCell />
            </Picker>
            <Tools w={103} items="cubeW v cubeD v line v diamond v ring v dots monitor" />
            <Tools w={33} items=": meshBig v wrench" />
            <Tools w={41} items="| backDark forwardDark undoL" />
            <Tools w={42} items="| minus plus undoL" />
            <Tools w={17} items=": star" />
            <Tools w={81} items=": fBalls comps fPi fPart fArrow fAxis v" />
            <Tools w={52} items="| redX cubeG fRed fork" />
          </LowerTools>
          <Panel>
            <Commands>
              {columns.map((c) => (
                <Column key={c[0]}>
                  {c.map((name) => <Command key={name} type="button">{name}</Command>)}
                </Column>
              ))}
            </Commands>
            <Modes>
              {modes.map((m, i) => (
                <Mode key={m}><input type="radio" name="mode" defaultChecked={i === 0} />{m}</Mode>
              ))}
            </Modes>
            <Watermark>Activate Windows<small>Go to Settings to activate Windows.</small></Watermark>
          </Panel>
        </Work>
      </Body>

      <Status>
        <StatusText>Ready</StatusText>
        <StatusCell $w={51} />
        <StatusCell $w={52}>Model</StatusCell>
        <StatusCell $w={59} />
        <StatusCell $w={57} />
      </Status>

      <Taskbar>
        <TaskButton $w={25} type="button" aria-label="Start">
          <Svg $s={9} viewBox="0 0 12 12"><path d="M0 1.800l5-.7v4.600H0zM5.700 1L12 0v5.700H5.700zM0 6.400h5V11l-5-.8zM5.700 6.400H12V12l-6.300-1z" fill="#fff" /></Svg>
        </TaskButton>
        <Cortana>
          <Svg $s={12} viewBox="0 0 12 12"><circle cx="6" cy="6" r="4.700" fill="none" stroke="#fff" strokeWidth="1.500" /></Svg>
          <input type="text" placeholder="Type here to search" aria-label="Search the computer" />
          <Svg $s={9} viewBox="0 0 12 12"><path d="M4 2q2-3.500 4 0v5q-2 3-4 0zM2 5.500v2q4 5 8 0v-2M6 9.500V12" fill="none" stroke="#bbb" /></Svg>
        </Cortana>
        <TaskButton $w={25} type="button" aria-label="Task view">
          <Svg $s={11} viewBox="0 0 12 12"><path d="M3 2h6v8H3zM.5 3v6M11.500 3v6" fill="none" stroke="#ddd" strokeWidth=".9" /></Svg>
        </TaskButton>
        <TaskButton $w={28} $open type="button" aria-label="Chrome">
          <Svg $s={12} viewBox="0 0 12 12"><circle cx="6" cy="6" r="5.700" fill="#fcc934" /><path d="M6 6L1 3.200A5.700 5.700 0 0 1 11 3.200z" fill="#e04335" /><path d="M1 3.200A5.700 5.700 0 0 0 5.500 11.700L8 7.200 4 7z" fill="#2fa04f" /><circle cx="6" cy="6" r="2.700" fill="#fff" /><circle cx="6" cy="6" r="2" fill="#3f7fe8" /></Svg>
        </TaskButton>
        <TaskButton $w={25} $open $on type="button" aria-label="HyperWorks">
          <Svg $s={11} viewBox="0 0 12 12"><path d="M0 0h12v12H0z" fill="#6d9cc6" /><path d="M0 0h4q1 6 0 12H0zM12 0H8Q7 6 8 12h4z" fill="#dbe9f4" /><path d="M3 5h6v2H3z" fill="#fff" /></Svg>
        </TaskButton>
        <TaskButton $w={26} $open type="button" aria-label="File Explorer">
          <Svg $s={12} viewBox="0 0 12 12"><path d="M0 1h4.500l1 1.300H12V11H0z" fill="#f8d669" /><path d="M0 3.500h12V5H0z" fill="#fff1b5" /><path d="M1.500 11V6.500h9V11h-2V8.500h-5V11z" fill="#3fa5e0" /></Svg>
        </TaskButton>
        <TaskButton $w={25} type="button" aria-label="Snipping tool">
          <Svg $s={12} viewBox="0 0 12 12"><ellipse cx="6" cy="3.500" rx="5.500" ry="3" fill="#eee" stroke="#b33" strokeWidth=".8" transform="rotate(-15 6 3.500)" /><path d="M4 5l5 5M8 4L5 10" stroke="#ccc" /><circle cx="5" cy="9.800" r="1.500" fill="none" stroke="#d33" /><circle cx="9.500" cy="9.500" r="1.500" fill="none" stroke="#2b8fd6" /></Svg>
        </TaskButton>
        <TaskButton $w={26} type="button" aria-label="WPS Office">
          <Svg $s={11} viewBox="0 0 12 12"><rect width="12" height="12" rx="1.500" fill="#2f7cf0" /><path d="M2 4l2 4.500L6 4.500l2 4L10.500 4M2 4h2" fill="none" stroke="#fff" strokeWidth="1.200" /></Svg>
        </TaskButton>
        <Tray>
          <Svg $s={9} viewBox="0 0 12 12"><path d="M2 8l4-4 4 4" fill="none" stroke="#ddd" /></Svg>
          <Svg $s={10} viewBox="0 0 12 12"><path d="M3 2h8.500v6.500H3zM6 8.500V11M4 11h5M.5 4.500V11H3V8" fill="none" stroke="#ddd" /></Svg>
          <Svg $s={10} viewBox="0 0 12 12"><path d="M.5 4.500h2L5 2v8L2.500 7.500h-2zM6.500 4.500q1 1.500 0 3M8.300 3q2 3 0 6M10 1.500q3 4.500 0 9" fill="none" stroke="#ddd" strokeWidth=".9" /></Svg>
          <Clock>12:00<br />29-12-2020</Clock>
          <Svg $s={10} viewBox="0 0 12 12"><path d="M1 1.500h10v8H8.500l-1.500 2-1.500-2H1z" fill="none" stroke="#ddd" /></Svg>
        </Tray>
      </Taskbar>
    </Page>
  );
}
